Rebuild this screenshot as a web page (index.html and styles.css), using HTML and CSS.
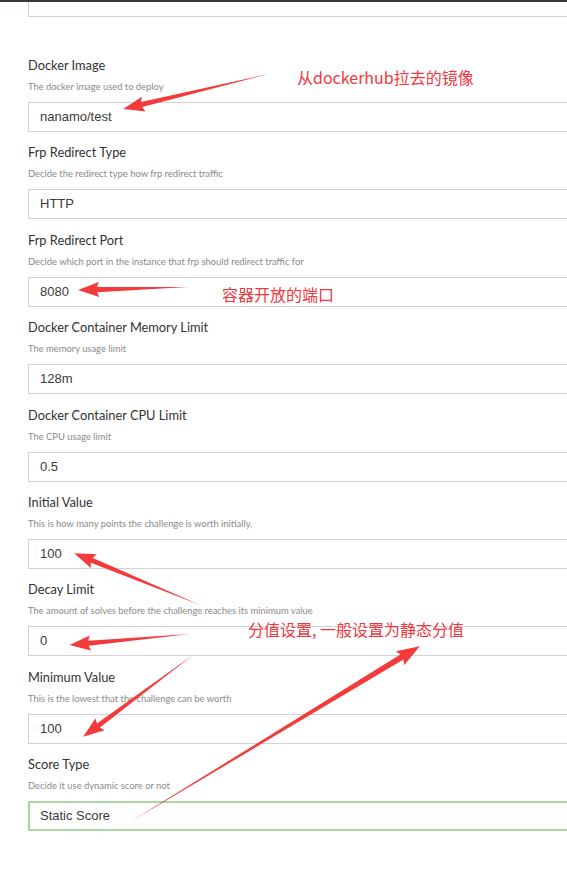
FILE: index.html
```html
<!DOCTYPE html>
<html>
<head>
<meta charset="utf-8">
<link rel="stylesheet" href="styles.css">
</head>
<body>
<div class="topbar"></div>
<div class="page">
  <div class="form">
    <div class="prev-box"></div>

    <div class="group">
      <label class="lbl">Docker Image</label>
      <div class="help">The docker image used to deploy</div>
      <div class="field">nanamo/test</div>
    </div>
    <div class="group">
      <label class="lbl">Frp Redirect Type</label>
      <div class="help">Decide the redirect type how frp redirect traffic</div>
      <div class="field">HTTP</div>
    </div>
    <div class="group">
      <label class="lbl">Frp Redirect Port</label>
      <div class="help">Decide which port in the instance that frp should redirect traffic for</div>
      <div class="field">8080</div>
    </div>
    <div class="group">
      <label class="lbl">Docker Container Memory Limit</label>
      <div class="help">The memory usage limit</div>
      <div class="field">128m</div>
    </div>
    <div class="group">
      <label class="lbl">Docker Container CPU Limit</label>
      <div class="help">The CPU usage limit</div>
      <div class="field">0.5</div>
    </div>
    <div class="group">
      <label class="lbl">Initial Value</label>
      <div class="help">This is how many points the challenge is worth initially.</div>
      <div class="field">100</div>
    </div>
    <div class="group">
      <label class="lbl">Decay Limit</label>
      <div class="help">The amount of solves before the challenge reaches its minimum value</div>
      <div class="field">0</div>
    </div>
    <div class="group">
      <label class="lbl">Minimum Value</label>
      <div class="help">This is the lowest that the challenge can be worth</div>
      <div class="field">100</div>
    </div>
    <div class="group">
      <label class="lbl">Score Type</label>
      <div class="help">Decide it use dynamic score or not</div>
      <div class="field field-valid">Static Score</div>
    </div>
  </div>

  <svg class="arrows" width="567" height="871" viewBox="0 0 567 871">
    <g fill="#f43a3a">
      <g transform="translate(268,74) rotate(166.4)">
        <polygon points="0,0 130,-2.6 128,-7.5 149,0 128,7.5 130,2.6"/>
      </g>
      <g transform="translate(188,287) rotate(178.4)">
        <polygon points="0,0 91,-2.6 89,-7.5 110,0 89,7.5 91,2.6"/>
      </g>
      <g transform="translate(200,605) rotate(-157.6)">
        <polygon points="0,0 117,-2.6 115,-7.5 136,0 115,7.5 117,2.6"/>
      </g>
      <g transform="translate(190,634) rotate(174.8)">
        <polygon points="0,0 102,-2.6 100,-7.5 121,0 100,7.5 102,2.6"/>
      </g>
      <g transform="translate(193,655) rotate(143.3)">
        <polygon points="0,0 118,-2.6 116,-7.5 137,0 116,7.5 118,2.6"/>
      </g>
      <g transform="translate(130,822) rotate(-31.25)">
        <polygon points="0,0 318,-3 316,-8 339,0 316,8 318,3"/>
      </g>
    </g>
  </svg>
  <span class="note note-1">从dockerhub拉去的镜像</span>
  <span class="note note-2">容器开放的端口</span>
  <span class="note note-3">分值设置, 一般设置为静态分值</span>
</div>
</body>
</html>
```

FILE: styles.css
```css
html, body {
  margin: 0;
  padding: 0;
  background: #ffffff;
  overflow: hidden;
}

.topbar {
  height: 2px;
  background: #343a40;
}

.page {
  position: relative;
  width: 567px;
  height: 869px;
  overflow: hidden;
}

.form {
  width: 640px;
  padding-left: 28px;
  font-family: Lato, "Noto Sans", sans-serif;
}

.prev-box {
  height: 14px;
  border-left: 1px solid #d2d2d2;
  border-bottom: 1px solid #d2d2d2;
  margin-bottom: 39px;
}

.group {
  margin-bottom: 11.4px;
}

.lbl {
  display: block;
  font-size: 12.8px;
  line-height: 18px;
  color: #333333;
}

.help {
  margin-top: 6px;
  font-size: 9.4px;
  line-height: 14px;
  color: #8a8a8a;
}

.field {
  margin-top: 8px;
  box-sizing: border-box;
  height: 30px;
  border: 1px solid #d0d4da;
  padding: 0 0 0 11px;
  font-family: "Liberation Sans", Arial, sans-serif;
  font-size: 13px;
  line-height: 28px;
  color: #3a3a3a;
}

.field-valid {
  border: 2px solid #a9d8a1;
  padding-left: 10px;
  line-height: 26px;
}

.arrows {
  position: absolute;
  left: 0;
  top: -2px;
}

.note {
  position: absolute;
  font-family: "Noto Sans CJK SC", "Noto Sans", sans-serif;
  font-size: 16px;
  line-height: 20px;
  color: #f2363c;
  white-space: nowrap;
}

.note-1 { left: 297px; top: 65px; }
.note-2 { left: 222px; top: 282px; }
.note-3 { left: 248px; top: 617px; }
```
